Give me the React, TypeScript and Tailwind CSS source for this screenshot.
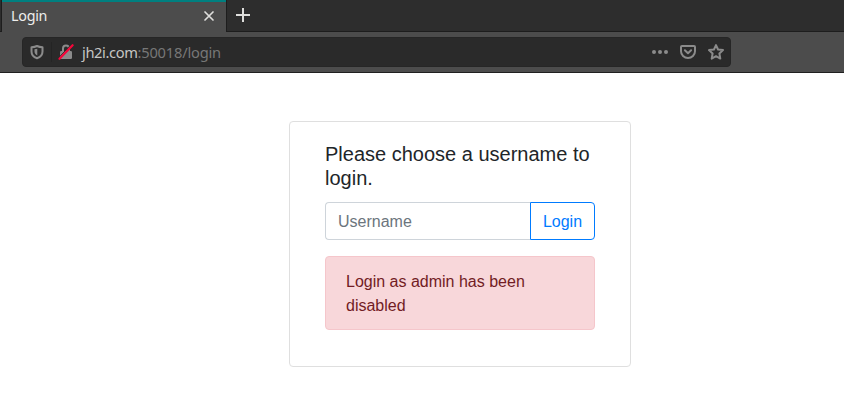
function ShieldIcon() {
  return (
    <svg width="16" height="16" viewBox="0 0 16 16" fill="none" className="shrink-0">
      <path d="M8 2C6.200 2.800 4.400 3.100 2.500 3.200v4.300c0 3.300 2.100 5.700 5.500 6.700 3.400-1 5.500-3.400 5.500-6.700V3.200C11.600 3.100 9.800 2.800 8 2z" stroke="#8b8b8b" strokeWidth="2" strokeLinejoin="round" />
      <path d="M8.300 4.800v6.700C6.500 10.600 5.500 9.400 5.500 7.500V5.300c1-.1 1.900-.2 2.800-.5z" fill="#8b8b8b" />
    </svg>
  );
}

function InsecureLockIcon() {
  return (
    <svg width="16" height="16" viewBox="0 0 16 16" fill="none" className="shrink-0">
      <path d="M5 8V4.500a3 3 0 0 1 6 0V8" stroke="#8b8b8b" strokeWidth="2" />
      <rect x="2" y="7" width="12" height="8" rx="1.300" fill="#8b8b8b" />
      <path d="M.5 13.800 13.200.6" stroke="#2a2a2a" strokeWidth="1" />
      <path d="M1.500 14.800 14.600 1.200" stroke="#f5063a" strokeWidth="2.200" strokeLinecap="round" />
    </svg>
  );
}

function PocketIcon() {
  return (
    <svg width="16" height="16" viewBox="0 0 16 16" fill="none" stroke="#8b8b8b" strokeWidth="2" strokeLinecap="round" strokeLinejoin="round">
      <path d="M2 2h12a1 1 0 0 1 1 1v4.200a7 6.800 0 0 1-14 0V3a1 1 0 0 1 1-1z" />
      <path d="M4.900 6.300 8 9.300l3.100-3" />
    </svg>
  );
}

function StarIcon() {
  return (
    <svg width="16" height="16" viewBox="0 0 16 16" fill="none" stroke="#8b8b8b" strokeWidth="2" strokeLinejoin="round">
      <path d="m8 1.100 2.050 4.400 4.950.6-3.600 3.450.9 5.050L8 12.200l-4.300 2.400.9-5.050L1 6.100l4.950-.6z" />
    </svg>
  );
}

function TabStrip() {
  return (
    <div className="flex h-8 bg-[#2d2d2d]">
      <div className="h-8 w-0.5 border-r border-b border-[#1d1d1d]" />
      <div className="flex h-8 w-56 items-center justify-between border-t-2 border-[#008080] bg-[#4c4c4c] pr-[11px] pl-[9px]">
        <span className="-mt-0.5 text-[14.3px] leading-5 tracking-[-0.25px] text-[#eeeeec]">Login</span>
        <svg width="12" height="12" viewBox="0 0 12 12" stroke="#dededc" strokeWidth="1.700" strokeLinecap="round" className="-mt-0.5">
          <path d="m2 2 8 8M10 2l-8 8" />
        </svg>
      </div>
      <div className="flex flex-1 items-start border-b border-l border-[#1d1d1d] pt-2 pl-[9px]">
        <svg width="14" height="14" viewBox="0 0 14 14" stroke="#dededc" strokeWidth="2">
          <path d="M7 0v14M0 7h14" />
        </svg>
      </div>
    </div>
  );
}

function AddressBar() {
  return (
    <div className="h-[41px] border-b border-[#202020] bg-[#4c4c4c] pt-[5px] pl-[22px]">
      <div className="flex h-[30px] w-[709px] items-center rounded-[4px] border border-[#262626] bg-[#2a2a2a] pr-[6px] pl-[6px]">
        <ShieldIcon />
        <div className="ml-[6px] h-5 w-px bg-[#242424]" />
        <div className="ml-[6px] flex"><InsecureLockIcon /></div>
        <div className="ml-2 flex-1 text-[14.67px] leading-5 tracking-[-0.2px] text-[#777777]">
          <span className="tracking-[-0.38px] text-[#c6c6c4]">jh2i.com</span>:50018/login
        </div>
        <div className="flex items-center gap-3">
          <svg width="16" height="16" viewBox="0 0 16 16" fill="#8b8b8b">
            <circle cx="2" cy="8" r="2" />
            <circle cx="8" cy="8" r="2" />
            <circle cx="14" cy="8" r="2" />
          </svg>
          <PocketIcon />
          <StarIcon />
        </div>
      </div>
    </div>
  );
}

export default function App() {
  return (
    <div className="h-[406px] w-[844px] overflow-hidden bg-white">
      <header className="font-['Noto_Sans',sans-serif]">
        <TabStrip />
        <AddressBar />
      </header>
      <main className="pt-12 pl-[289px] font-['Liberation_Sans',Arial,sans-serif]">
        <div className="h-[246px] w-[342px] rounded border border-[#dfdfdf] px-[35px] pt-5">
          <h1 className="mb-3 text-[20px] leading-6 text-[#212529]">Please choose a username to login.</h1>
          <form className="flex h-[38px]">
            <input
              type="text"
              placeholder="Username"
              className="min-w-0 flex-1 rounded-l border border-r-0 border-[#ced4da] px-3 pt-0.5 text-base outline-none placeholder:text-[#6c757d]"
            />
            <button type="button" className="w-[65px] rounded-r border border-[#007bff] pt-0.5 text-base text-[#007bff]">
              Login
            </button>
          </form>
          <div role="alert" className="mt-4 h-[74px] rounded border border-[#f5c6cb] bg-[#f8d7da] px-5 pt-[13px] text-base leading-6 text-[#721c24]">
            Login as admin has been disabled
          </div>
        </div>
      </main>
    </div>
  );
}
